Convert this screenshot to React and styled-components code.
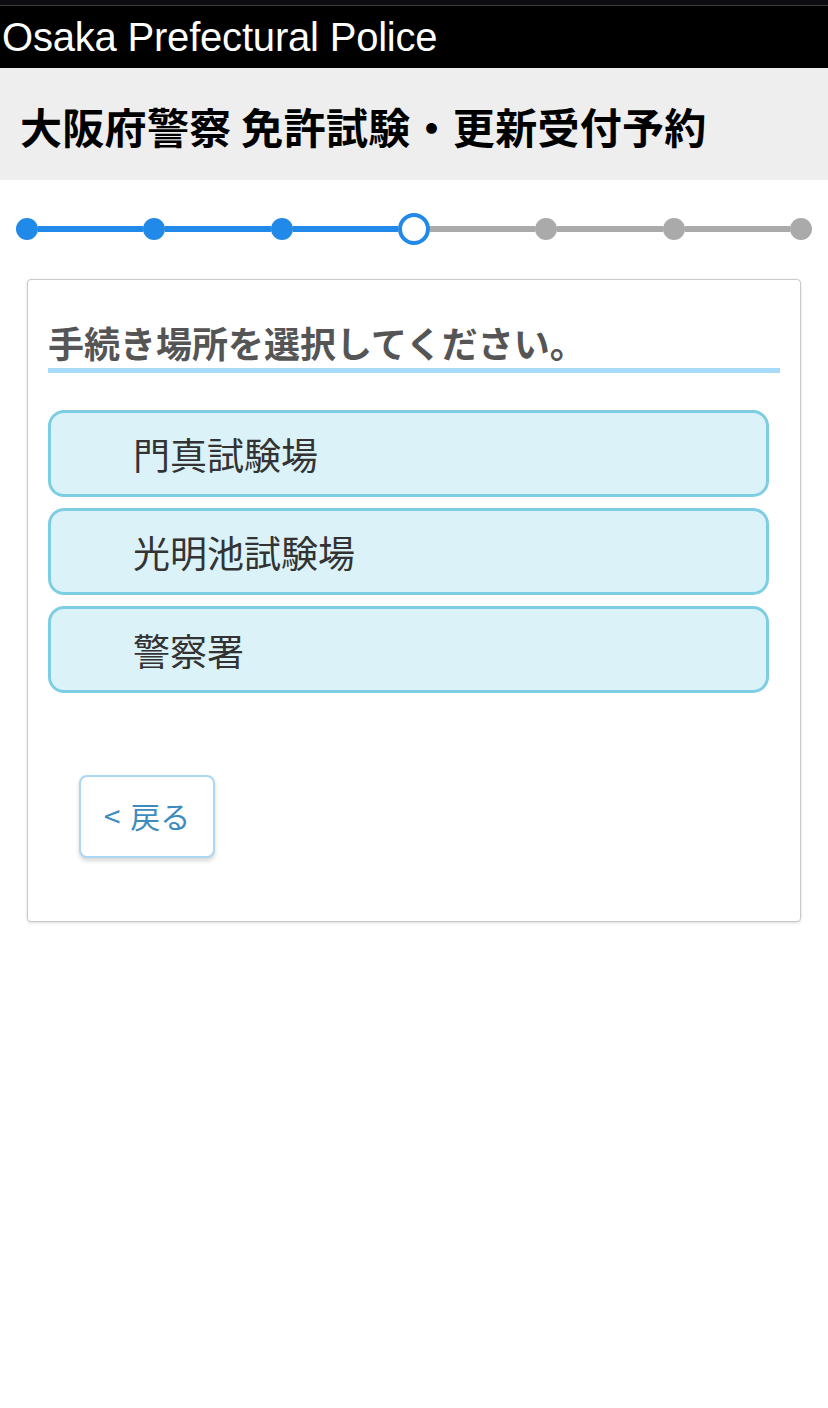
import React from 'react';
import styled, { createGlobalStyle } from 'styled-components';

const GlobalStyle = createGlobalStyle`
  body {
    margin: 0;
    background: #ffffff;
    font-family: "Noto Sans CJK JP", "Noto Sans", sans-serif;
  }
`;

const Page = styled.div`
  width: 828px;
  min-height: 1408px;
  background: #ffffff;
`;

const TopBar = styled.header`
  background: #000000;
  border-top: 5px solid #0c0c10;
  box-shadow: inset 0 1px 0 #3c3c3c;
  display: flex;
  align-items: center;
  padding-left: 2px;
  padding-top: 1px;
  box-sizing: border-box;
  height: 68px;
`;

const BrandName = styled.div`
  color: #ffffff;
  font-family: "Liberation Sans", Arial, sans-serif;
  font-size: 40px;
  letter-spacing: -0.2px;
  line-height: 1;
`;

const TitleBand = styled.div`
  background: #eeeeee;
  height: 112px;
  display: flex;
  align-items: center;
  padding: 4px 0 0 20px;
  box-sizing: border-box;
`;

const Title = styled.h1`
  margin: 0;
  font-size: 42px;
  font-weight: 700;
  color: #000000;
  line-height: 1;
  letter-spacing: 0.3px;
`;

const Stepper = styled.div`
  display: flex;
  align-items: center;
  margin: 33px 16px 34px;
  height: 32px;
`;

const Dot = styled.div`
  flex: none;
  box-sizing: border-box;
  width: ${p => (p.$current ? 32 : 22)}px;
  height: ${p => (p.$current ? 32 : 22)}px;
  border-radius: 50%;
  background: ${p => (p.$current ? '#ffffff' : p.$done ? '#2189e8' : '#aaaaaa')};
  border: ${p => (p.$current ? '4px solid #2189e8' : 'none')};
`;

const Line = styled.div`
  flex: 1;
  height: 6px;
  background: ${p => (p.$done ? '#2189e8' : '#aaaaaa')};
`;

const Card = styled.section`
  margin: 0 27px;
  border: 1px solid #c9c9c9;
  border-radius: 4px;
  box-shadow: 0 1px 3px rgba(0, 0, 0, 0.14);
  padding: 42px 20px 63px;
  background: #ffffff;
`;

const Heading = styled.h2`
  margin: 0;
  font-size: 36px;
  font-weight: 700;
  color: #555555;
  line-height: 40px;
  padding-bottom: 6px;
  border-bottom: 5px solid #a8dbfa;
`;

const OptionList = styled.div`
  display: flex;
  flex-direction: column;
  gap: 11px;
  margin: 37px 11px 0 0;
`;

const Option = styled.button`
  height: 87px;
  box-sizing: border-box;
  border: 3px solid #7dcde3;
  border-radius: 16px;
  background: #dcf2f9;
  text-align: left;
  padding: 0 0 0 82px;
  font-family: inherit;
  font-size: 37px;
  color: #333333;
  cursor: pointer;
`;

const BackButton = styled.button`
  margin: 82px 0 0 31px;
  width: 136px;
  height: 83px;
  box-sizing: border-box;
  border: 2px solid #acd7f2;
  border-radius: 8px;
  background: #ffffff;
  box-shadow: 0 3px 4px rgba(0, 0, 0, 0.16);
  color: #3d8cbf;
  font-family: inherit;
  font-size: 30px;
  padding: 0 0 4px;
  cursor: pointer;
`;

const Chevron = styled.span`
  margin-right: 10px;
`;

const steps = 7;
const currentStep = 3;
const places = ['門真試験場', '光明池試験場', '警察署'];

export default function App() {
  const parts = [];
  for (let i = 0; i < steps; i++) {
    if (i > 0) parts.push(<Line key={'l' + i} $done={i <= currentStep} />);
    parts.push(<Dot key={'d' + i} $done={i < currentStep} $current={i === currentStep} />);
  }

  return (
    <Page>
      <GlobalStyle />
      <TopBar>
        <BrandName>Osaka Prefectural Police</BrandName>
      </TopBar>
      <TitleBand>
        <Title>大阪府警察 免許試験・更新受付予約</Title>
      </TitleBand>
      <Stepper>{parts}</Stepper>
      <Card>
        <Heading>手続き場所を選択してください。</Heading>
        <OptionList>
          {places.map(p => (
            <Option key={p}>{p}</Option>
          ))}
        </OptionList>
        <BackButton>
          <Chevron>&lt;</Chevron>戻る
        </BackButton>
      </Card>
    </Page>
  );
}
